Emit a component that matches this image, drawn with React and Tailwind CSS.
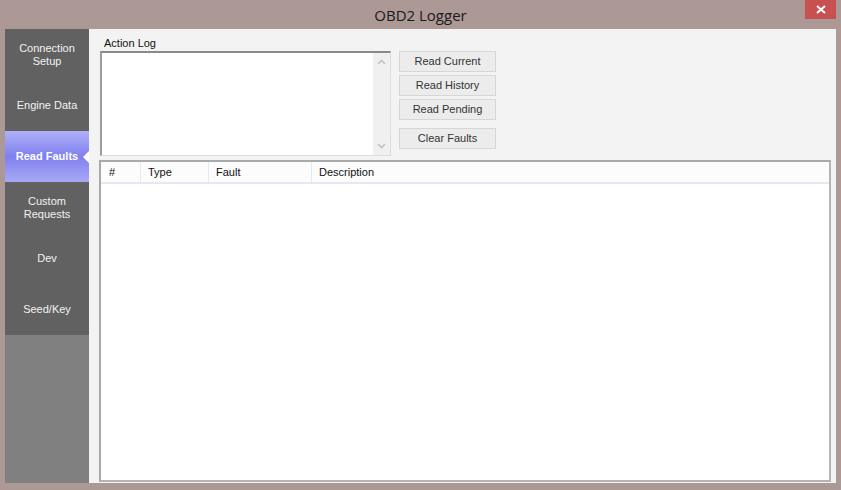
import { useState } from 'react'

const tabs = [
  ['Connection', 'Setup'],
  ['Engine Data'],
  ['Read Faults'],
  ['Custom', 'Requests'],
  ['Dev'],
  ['Seed/Key'],
]

const buttons = ['Read Current', 'Read History', 'Read Pending']

function Chevron({ up }) {
  return (
    <svg width="9" height="6" viewBox="0 0 9 6" className="block">
      <path d={up ? 'M1 5 L4.5 1.5 L8 5' : 'M1 1 L4.5 4.5 L8 1'} fill="none" stroke="#c2c2c2" strokeWidth="1.6" />
    </svg>
  )
}

function Button({ children }) {
  return (
    <button className="w-[97px] h-[21px] bg-[#ececec] border border-[#d6d6d6] text-[11px] text-[#333] leading-none">
      {children}
    </button>
  )
}

export default function App() {
  const [active, setActive] = useState(2)

  return (
    <div className="w-[841px] h-[490px] bg-[#ac9895] flex flex-col overflow-hidden" style={{ fontFamily: '"Liberation Sans", Arial, sans-serif' }}>
      {/* title bar */}
      <div className="h-[29px] flex items-start relative">
        <div className="flex-1 text-center pt-[4px] text-[15px] text-[#1a1a1a]" style={{ fontFamily: '"Open Sans", "Noto Sans", sans-serif' }}>
          OBD2 Logger
        </div>
        <div className="absolute right-[5px] top-0 w-[31px] h-[19px] bg-[#c75050] flex items-center justify-center">
          <svg width="10" height="9" viewBox="0 0 10 9">
            <path d="M1 1 L9 8 M9 1 L1 8" stroke="#fff" strokeWidth="2" />
          </svg>
        </div>
      </div>

      <div className="flex-1 flex px-[5px] pb-[7px]">
        {/* sidebar */}
        <div className="w-[84px] bg-[#808080] flex flex-col">
          {tabs.map((t, i) => (
            <div
              key={i}
              onClick={() => setActive(i)}
              className={
                'h-[51px] relative flex flex-col items-center justify-center text-[11px] leading-[13px] cursor-pointer ' +
                (i === active
                  ? 'bg-gradient-to-b from-[#b0b0f8] via-[#8080ee] to-[#a8a8f5] text-white font-bold'
                  : 'bg-[#616161] text-[#f2f2f2]')
              }
            >
              {t.map(l => <span key={l}>{l}</span>)}
              {i === active && (
                <span className="absolute right-0 top-1/2 -translate-y-1/2 w-0 h-0 border-y-[6px] border-y-transparent border-r-[6px] border-r-white" />
              )}
            </div>
          ))}
        </div>

        {/* main panel */}
        <div className="flex-1 bg-[#f3f3f3] flex flex-col pl-[10px] pr-[5px] pt-[7px] pb-[1px]">
          <div className="flex">
            <div className="flex flex-col">
              <div className="text-[11px] text-[#111] leading-[14px] pl-[5px] mb-[1px]">Action Log</div>
              <div className="ml-[1px] w-[291px] h-[105px] bg-white border-t-2 border-l-2 border-t-[#8a8a8a] border-l-[#9c9c9c] border-r border-b border-r-[#dcdcdc] border-b-[#dcdcdc] flex justify-end">
                <div className="w-[17px] bg-[#f0f0f0] flex flex-col justify-between items-center py-[6px]">
                  <Chevron up />
                  <Chevron />
                </div>
              </div>
            </div>
            <div className="flex flex-col pt-[15px] pl-[8px]">
              <div className="flex flex-col gap-[3px]">
                {buttons.map(b => <Button key={b}>{b}</Button>)}
              </div>
              <div className="mt-[5px]"><Button>Clear Faults</Button></div>
            </div>
          </div>

          {/* list view */}
          <div className="mt-[4px] flex-1 w-[732px] bg-white border-2 border-[#a9a9a9] border-r-[#b4b4b4] border-b-[#b4b4b4] flex flex-col">
            <div className="h-[22px] bg-[#fcfcfc] border-b-2 border-[#e5e8f0] flex text-[11px] text-[#111] items-center">
              <div className="w-[40px] h-full border-r border-[#e3e9f4] pl-[8px] pt-[1px] flex items-center">#</div>
              <div className="w-[68px] h-full border-r border-[#e3e9f4] pl-[7px] pt-[1px] flex items-center">Type</div>
              <div className="w-[103px] h-full border-r border-[#e3e9f4] pl-[7px] pt-[1px] flex items-center">Fault</div>
              <div className="flex-1 pl-[7px] pt-[1px]">Description</div>
            </div>
            <div className="flex-1" />
          </div>
        </div>
      </div>
    </div>
  )
}
